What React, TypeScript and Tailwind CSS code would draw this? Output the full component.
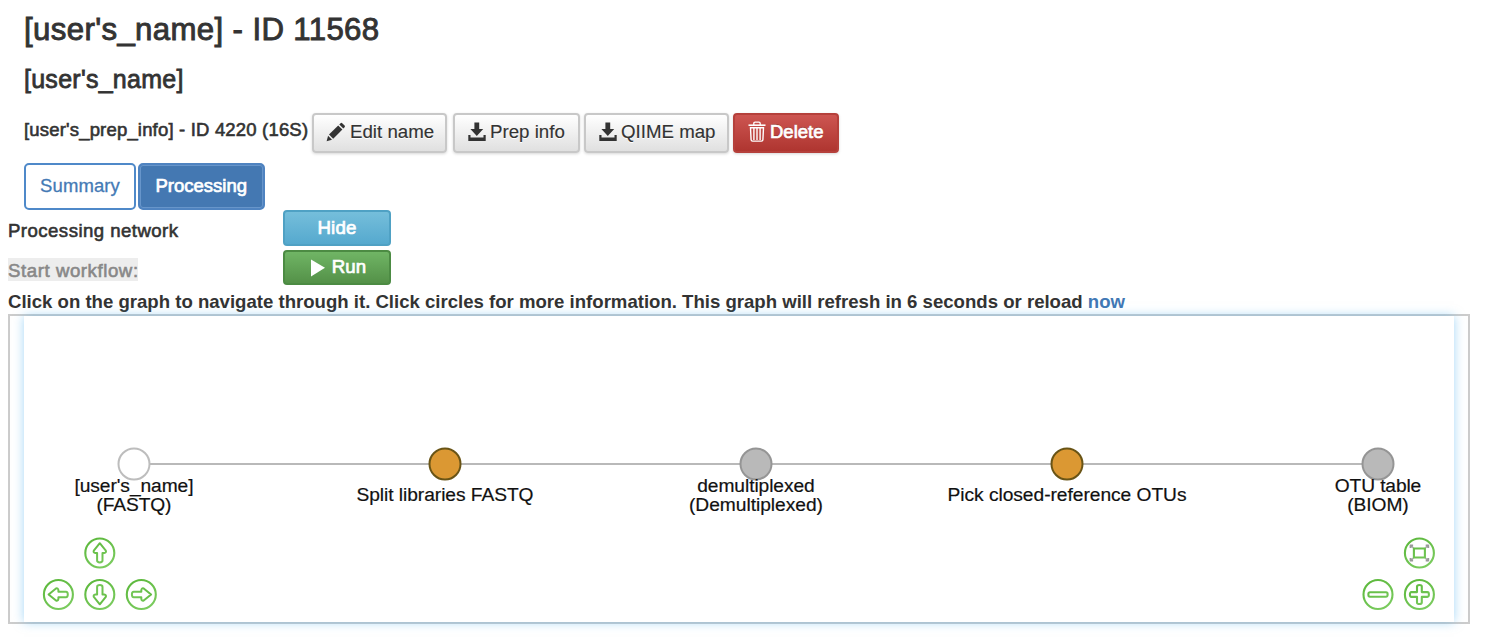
import React from "react";

const lightButton =
  "flex h-[39.5px] items-center rounded-[4px] border-2 border-[#c8c8c8] bg-linear-to-b from-white to-[#e0e0e0] text-[18.7px] text-[#333] shadow-[0_1px_3px_rgba(0,0,0,0.16)] [text-shadow:0_1px_0_#fff] [-webkit-text-stroke:0.15px_#333]";

function PencilIcon() {
  return (
    <svg className="h-5 w-5 shrink-0" viewBox="0 0 20 20" fill="#333">
      <path d="M.6 19.2l1.5-5.4 3.9 3.9z" />
      <path d="M3 12.6L12.2 3.4l4.2 4.2-9.2 9.2z" />
      <path d="M13.3 2.5l1.3-1.3q.8-.8 1.6 0l2.4 2.4q.8.8 0 1.6l-1.3 1.3z" />
    </svg>
  );
}

function DownloadIcon() {
  return (
    <svg className="h-5 w-[18px] shrink-0" viewBox="0 0 18 20" fill="#333">
      <path d="M6.4 .6h4.8v6.5h4L8.8 14 2.4 7.1h4z" />
      <path d="M.3 13h2.2v2.4h13V13h2.2v6H.3z" />
    </svg>
  );
}

function TrashIcon() {
  return (
    <svg className="h-[22px] w-[18px] shrink-0" viewBox="0 0 18 22" fill="none" stroke="#fff">
      <path d="M.5 4.2h17" strokeWidth="1.6" />
      <path d="M5.8 3.9V2.4q0-1.3 1.3-1.3h3.8q1.3 0 1.3 1.3v1.5" strokeWidth="1.3" />
      <path d="M2.5 6.7h13l-.6 12q-.1 1.4-1.5 1.4H4.6q-1.4 0-1.5-1.4z" strokeWidth="1.4" />
      <path d="M5.9 7v12M9 7v12M12.1 7v12" strokeWidth="1.4" />
    </svg>
  );
}

const ARROW = "M0-9.8L6-2.4Q6.8-.4 4.4 0H2.7V7.6Q2.7 9.4 0 9.4T-2.7 7.6V0H-4.4Q-6.8-.4-6-2.4Z";

function NavButton({ x, y, children }: { x: number; y: number; children: React.ReactNode }) {
  return (
    <g transform={`translate(${x} ${y})`} fill="none" stroke="url(#green)" strokeLinejoin="round">
      <circle r="14.5" strokeWidth="2.1" />
      {children}
    </g>
  );
}

const nodes = [
  { x: 110, fill: "#fff", stroke: "#bdbdbd", lines: ["[user's_name]", "(FASTQ)"], widths: [119, 75] },
  { x: 421, fill: "#db9833", stroke: "#695416", lines: ["Split libraries FASTQ"], widths: [177] },
  { x: 732, fill: "#b9b9b9", stroke: "#959595", lines: ["demultiplexed", "(Demultiplexed)"], widths: [117.5, 134] },
  { x: 1043, fill: "#db9833", stroke: "#695416", lines: ["Pick closed-reference OTUs"], widths: [239] },
  { x: 1354, fill: "#b9b9b9", stroke: "#959595", lines: ["OTU table", "(BIOM)"], widths: [86.5, 61.5] },
];

function Network() {
  return (
    <svg className="block h-[306px] w-[1430px]" viewBox="0 0 1430 306">
      <defs>
        <linearGradient id="green" gradientUnits="userSpaceOnUse" x1="-8" y1="-15" x2="8" y2="15">
          <stop offset="0" stopColor="#5cb83c" />
          <stop offset="1" stopColor="#7ccc60" />
        </linearGradient>
      </defs>
      <path d="M110 148H1354" stroke="#b9b9b9" strokeWidth="2" />
      {nodes.map((n) => (
        <g key={n.x}>
          <circle cx={n.x} cy="148" r="15.5" fill={n.fill} stroke={n.stroke} strokeWidth="2" />
          {n.lines.map((line, i) => (
            <text
              key={line}
              x={n.x}
              y={n.lines.length === 1 ? 185 : 176 + i * 18.5}
              textAnchor="middle"
              textLength={n.widths[i]}
              fontSize="19.2"
              fill="#111"
              stroke="#111"
              strokeWidth="0.2"
            >
              {line}
            </text>
          ))}
        </g>
      ))}
      <NavButton x={75.8} y={237}>
        <path d={ARROW} strokeWidth="2" />
      </NavButton>
      <NavButton x={34.4} y={278.5}>
        <path d={ARROW} strokeWidth="2" transform="rotate(-90)" />
      </NavButton>
      <NavButton x={75.8} y={278.5}>
        <path d={ARROW} strokeWidth="2" transform="rotate(180)" />
      </NavButton>
      <NavButton x={117.3} y={278.5}>
        <path d={ARROW} strokeWidth="2" transform="rotate(90)" />
      </NavButton>
      <NavButton x={1395.4} y={237}>
        <path d="M-9-8L-5-4M9-8L5-4M-9 8L-5 4M9 8L5 4" stroke="#aaa" strokeWidth="1.5" />
        <path d="M-8.8-5V-7.4H-6.3M8.8-5V-7.4H6.3M-8.8 5V7.4H-6.3M8.8 5V7.4H6.3" stroke="#999" strokeWidth="2" />
        <rect x="-5.5" y="-4.5" width="11" height="9" strokeWidth="2.1" fill="#fff" />
      </NavButton>
      <NavButton x={1354} y={278.5}>
        <rect x="-9.6" y="-2.2" width="19.2" height="4.4" rx="1.6" strokeWidth="2.1" />
      </NavButton>
      <NavButton x={1395.4} y={278.5}>
        <path
          d="M-2.4-8Q-2.4-9.5 0-9.5T2.4-8V-2.4H8Q9.5-2.4 9.5 0T8 2.4H2.4V8Q2.4 9.5 0 9.5T-2.4 8V2.4H-8Q-9.5 2.4-9.5 0T-8-2.4H-2.4Z"
          strokeWidth="2.1"
        />
      </NavButton>
    </svg>
  );
}

export default function App() {
  return (
    <main className="flex h-[638px] w-[1494px] flex-col overflow-hidden whitespace-nowrap bg-white font-['Liberation_Sans',Arial,sans-serif] text-[#333]">
      <header className="flex flex-col pl-6">
        <h1 className="mt-[10px] h-10 text-[31.2px] leading-10 tracking-[0.36px] [-webkit-text-stroke:0.9px_#333]">
          [user's_name] - ID 11568
        </h1>
        <h2 className="mt-[13px] h-8 text-[25px] leading-8 tracking-[0.26px] [-webkit-text-stroke:0.8px_#333]">
          [user's_name]
        </h2>
        <div className="mt-[18px] flex h-[39.5px] items-center">
          <h3 className="w-[288px] pb-[6px] text-[18.5px] leading-6 tracking-[0.18px] [-webkit-text-stroke:0.6px_#333]">
            [user's_prep_info] - ID 4220 (16S)
          </h3>
          <button className={`${lightButton} w-[135px] gap-[4px] pb-px pl-3`}>
            <PencilIcon />
            Edit name
          </button>
          <button className={`${lightButton} ml-[6px] w-[127px] gap-[4px] pb-px pl-[13px]`}>
            <DownloadIcon />
            Prep info
          </button>
          <button className={`${lightButton} ml-1 w-[145px] gap-[4px] pb-px pl-[13px]`}>
            <DownloadIcon />
            QIIME map
          </button>
          <button className="ml-1 flex h-[39.5px] w-[106px] items-center gap-1 rounded-[4px] border-2 border-[#b5403b] bg-linear-to-b from-[#cd5551] to-[#af3530] pb-[2px] pl-[13px] text-[18.5px] text-white shadow-[0_1px_3px_rgba(0,0,0,0.16)] [-webkit-text-stroke:0.7px_#fff] [text-shadow:0_-1px_0_rgba(0,0,0,0.25)]">
            <TrashIcon />
            Delete
          </button>
        </div>
        <nav className="mt-[10px] flex h-[47.5px] gap-[2px] text-[18.5px]">
          <button className="w-[112px] rounded-[5px] border-2 border-[#4f89c9] bg-white pb-px tracking-[0.1px] text-[#447ab5] [-webkit-text-stroke:0.3px_#447ab5]">
            Summary
          </button>
          <button className="w-[126.5px] rounded-[5px] border-2 border-[#4f83c0] bg-[#4478b2] pb-px text-white shadow-[inset_0_0_0_1px_#6795ca] [-webkit-text-stroke:0.7px_#fff]">
            Processing
          </button>
        </nav>
      </header>
      <section className="flex flex-col pl-2">
        <div className="flex h-[36px] items-start">
          <span className="w-[275px] pt-[7px] text-[18.6px] leading-7 tracking-[0.46px] [-webkit-text-stroke:0.6px_#333]">
            Processing network
          </span>
          <button className="h-[35.5px] w-[108px] rounded-[4px] border-2 border-[#4fa1c4] bg-linear-to-b from-[#75bedb] to-[#55a9ce] pt-px text-[18.7px] tracking-[0.2px] text-white [-webkit-text-stroke:0.7px_#fff]">
            Hide
          </button>
        </div>
        <div className="mt-[3.5px] flex h-[35.5px] items-start">
          <div className="w-[275px] pt-[8.5px]">
            <span className="block h-[23px] w-[130px] bg-[#ededed] text-[18.6px] leading-[26px] tracking-[0.58px] text-[#888] [-webkit-text-stroke:0.6px_#888]">
              Start workflow:
            </span>
          </div>
          <button className="flex h-[35.5px] w-[108px] items-center justify-center gap-[7px] rounded-[4px] border-2 border-[#4c8b43] bg-linear-to-b from-[#70b565] to-[#549148] pl-[2px] text-[18.7px] text-white [-webkit-text-stroke:0.7px_#fff]">
            <svg className="mt-[2px] h-[18px] w-[15px]" viewBox="0 0 15 18" fill="#fff">
              <path d="M1 .5L15 8.7 1 17.5z" />
            </svg>
            Run
          </button>
        </div>
        <p className="mt-[3.5px] h-[25px] text-[18.6px] font-bold leading-[25px] tracking-[-0.007px]">
          Click on the graph to navigate through it. Click circles for more information. This graph will refresh in 6 seconds or reload{" "}
          <a className="text-[#4178b5]">now</a>
        </p>
        <div className="flex h-[310px] w-[1462px] justify-center border-2 border-[#ccc]">
          <div className="h-[306px] w-[1430px] bg-white shadow-[0_0_10px_rgba(75,175,240,0.5)]">
            <Network />
          </div>
        </div>
      </section>
    </main>
  );
}
